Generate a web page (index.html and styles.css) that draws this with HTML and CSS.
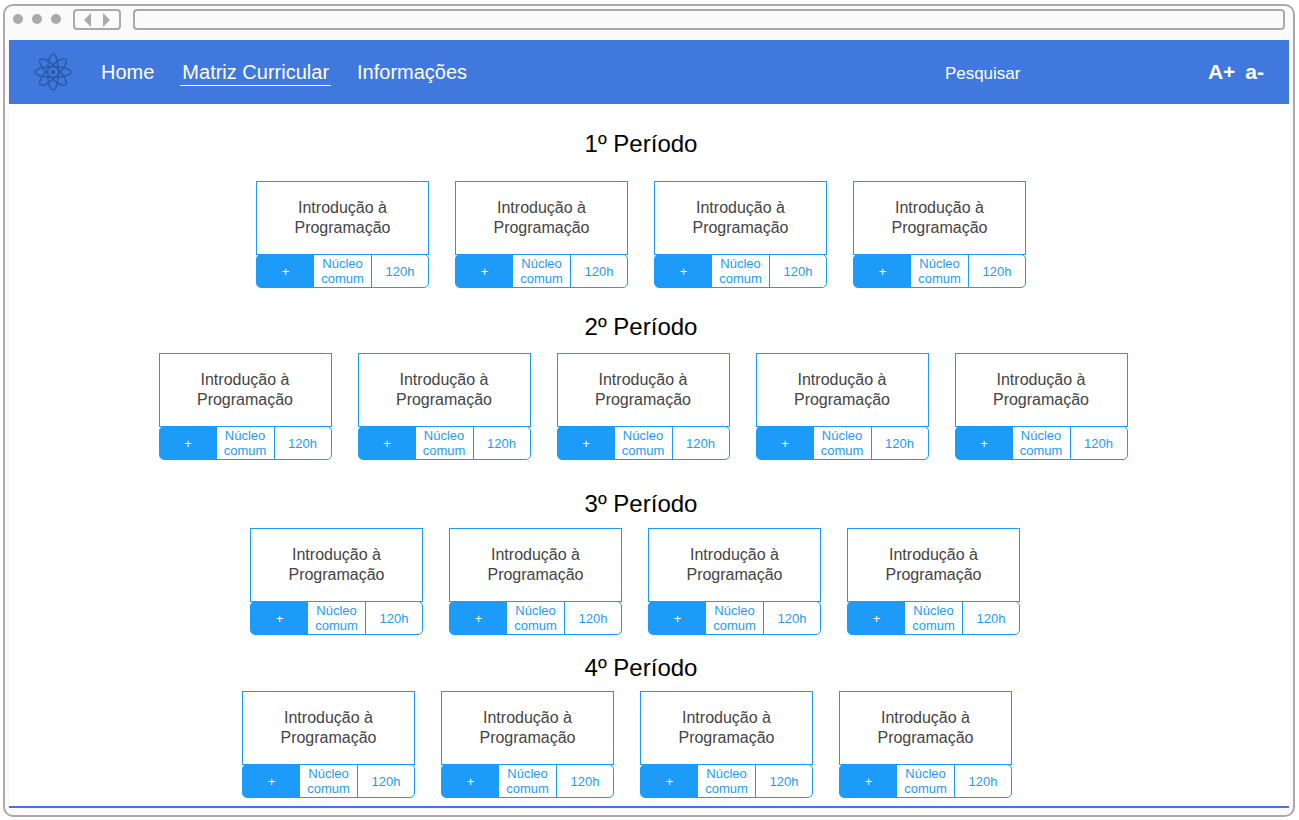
FILE: index.html
```
<!DOCTYPE html>
<html lang="pt-BR">
<head>
<meta charset="utf-8">
<title>Matriz Curricular</title>
<link rel="stylesheet" href="styles.css">
</head>
<body>
<div class="browser">
  <div class="toolbar">
    <div class="dots"><span class="dot"></span><span class="dot"></span><span class="dot"></span></div>
    <div class="history">
      <button class="arrow" type="button" aria-label="Voltar"><svg width="7" height="14" viewBox="0 0 7 14"><path d="M7 0v14L0 7z"/></svg></button>
      <button class="arrow" type="button" aria-label="Avançar"><svg width="7" height="14" viewBox="0 0 7 14"><path d="M0 0v14l7-7z"/></svg></button>
    </div>
    <input class="address" type="text" aria-label="Endereço">
  </div>
  <div class="page">
    <header class="header">
      <svg class="logo" viewBox="-19 -19 38 38" aria-hidden="true">
        <g fill="none" stroke="currentColor" stroke-width="1.6">
          <ellipse rx="18" ry="5.4"/>
          <ellipse rx="18" ry="5.4" transform="rotate(45)"/>
          <ellipse rx="18" ry="5.4" transform="rotate(90)"/>
          <ellipse rx="18" ry="5.4" transform="rotate(135)"/>
        </g>
        <circle r="4.2" fill="#4178dd"/>
        <circle r="2.2" fill="currentColor"/>
      </svg>
      <nav class="nav">
        <a class="link" href="#">Home</a>
        <a class="link current" href="#" aria-current="page">Matriz Curricular</a>
        <a class="link" href="#">Informações</a>
      </nav>
      <input class="search" type="text" placeholder="Pesquisar" aria-label="Pesquisar">
      <div class="sizes">
        <button class="size" type="button">A+</button>
        <button class="size" type="button">a-</button>
      </div>
    </header>
    <main class="main">
      <section class="period first">
        <h2 class="title">1º Período</h2>
        <div class="cards">
          <article class="card"><h3 class="name">Introdução à Programação</h3><div class="details"><button class="more" type="button">+</button><span class="cell">Núcleo comum</span><span class="cell hours">120h</span></div></article>
          <article class="card"><h3 class="name">Introdução à Programação</h3><div class="details"><button class="more" type="button">+</button><span class="cell">Núcleo comum</span><span class="cell hours">120h</span></div></article>
          <article class="card"><h3 class="name">Introdução à Programação</h3><div class="details"><button class="more" type="button">+</button><span class="cell">Núcleo comum</span><span class="cell hours">120h</span></div></article>
          <article class="card"><h3 class="name">Introdução à Programação</h3><div class="details"><button class="more" type="button">+</button><span class="cell">Núcleo comum</span><span class="cell hours">120h</span></div></article>
        </div>
      </section>
      <section class="period second">
        <h2 class="title">2º Período</h2>
        <div class="cards">
          <article class="card"><h3 class="name">Introdução à Programação</h3><div class="details"><button class="more" type="button">+</button><span class="cell">Núcleo comum</span><span class="cell hours">120h</span></div></article>
          <article class="card"><h3 class="name">Introdução à Programação</h3><div class="details"><button class="more" type="button">+</button><span class="cell">Núcleo comum</span><span class="cell hours">120h</span></div></article>
          <article class="card"><h3 class="name">Introdução à Programação</h3><div class="details"><button class="more" type="button">+</button><span class="cell">Núcleo comum</span><span class="cell hours">120h</span></div></article>
          <article class="card"><h3 class="name">Introdução à Programação</h3><div class="details"><button class="more" type="button">+</button><span class="cell">Núcleo comum</span><span class="cell hours">120h</span></div></article>
          <article class="card"><h3 class="name">Introdução à Programação</h3><div class="details"><button class="more" type="button">+</button><span class="cell">Núcleo comum</span><span class="cell hours">120h</span></div></article>
        </div>
      </section>
      <section class="period third">
        <h2 class="title">3º Período</h2>
        <div class="cards">
          <article class="card"><h3 class="name">Introdução à Programação</h3><div class="details"><button class="more" type="button">+</button><span class="cell">Núcleo comum</span><span class="cell hours">120h</span></div></article>
          <article class="card"><h3 class="name">Introdução à Programação</h3><div class="details"><button class="more" type="button">+</button><span class="cell">Núcleo comum</span><span class="cell hours">120h</span></div></article>
          <article class="card"><h3 class="name">Introdução à Programação</h3><div class="details"><button class="more" type="button">+</button><span class="cell">Núcleo comum</span><span class="cell hours">120h</span></div></article>
          <article class="card"><h3 class="name">Introdução à Programação</h3><div class="details"><button class="more" type="button">+</button><span class="cell">Núcleo comum</span><span class="cell hours">120h</span></div></article>
        </div>
      </section>
      <section class="period fourth">
        <h2 class="title">4º Período</h2>
        <div class="cards">
          <article class="card"><h3 class="name">Introdução à Programação</h3><div class="details"><button class="more" type="button">+</button><span class="cell">Núcleo comum</span><span class="cell hours">120h</span></div></article>
          <article class="card"><h3 class="name">Introdução à Programação</h3><div class="details"><button class="more" type="button">+</button><span class="cell">Núcleo comum</span><span class="cell hours">120h</span></div></article>
          <article class="card"><h3 class="name">Introdução à Programação</h3><div class="details"><button class="more" type="button">+</button><span class="cell">Núcleo comum</span><span class="cell hours">120h</span></div></article>
          <article class="card"><h3 class="name">Introdução à Programação</h3><div class="details"><button class="more" type="button">+</button><span class="cell">Núcleo comum</span><span class="cell hours">120h</span></div></article>
        </div>
      </section>
    </main>
  </div>
</div>
</body>
</html>
```

FILE: styles.css
```
* {
  box-sizing: border-box;
}

body {
  margin: 0;
  padding: 4px 4px 3px 3px;
  min-height: 100vh;
  display: flex;
  background: #fff;
  font-family: "Liberation Sans", Arial, sans-serif;
}

button,
input {
  margin: 0;
  padding: 0;
  border: 0;
  background: none;
  font: inherit;
  color: inherit;
}

.browser {
  flex: 1;
  display: flex;
  flex-direction: column;
  padding: 0 4px 7px;
  border: 2px solid #aaa;
  border-radius: 10px;
  background: #fafafa;
}

.toolbar {
  display: flex;
  align-items: flex-start;
  gap: 12px;
  height: 34px;
  padding: 3px 4px 0;
}

.dots {
  display: flex;
  gap: 9px;
  padding-top: 5px;
}

.dot {
  width: 10px;
  height: 10px;
  border-radius: 50%;
  background: #aaa;
}

.history {
  display: flex;
  align-items: center;
  justify-content: center;
  gap: 12px;
  width: 48px;
  height: 21px;
  border: 2px solid #aaa;
  border-radius: 4px;
}

.arrow {
  display: flex;
  fill: #aaa;
}

.address {
  flex: 1;
  min-width: 0;
  height: 21px;
  padding: 0 6px;
  border: 2px solid #aaa;
  border-radius: 4px;
  font-size: 13px;
}

.page {
  flex: 1;
  background: #fff;
  border-bottom: 2px solid #4178dd;
}

.header {
  display: flex;
  align-items: center;
  height: 64px;
  padding: 0 25px;
  background: #4178dd;
  color: #fff;
}

.logo {
  width: 38px;
  height: 38px;
  color: #2b5caa;
}

.nav {
  display: flex;
  gap: 26px;
  margin-left: 29px;
  margin-right: auto;
}

.link {
  border-bottom: 1px solid transparent;
  color: inherit;
  font-size: 20px;
  line-height: 26px;
  text-decoration: none;
}

.current {
  padding: 0 2px;
  border-bottom-color: #fff;
}

.search {
  width: 240px;
  margin-right: 23px;
  padding-top: 3px;
  font-size: 17px;
}

.search::placeholder {
  color: #fff;
  opacity: 1;
}

.sizes {
  display: flex;
  gap: 10px;
}

.size {
  font-size: 21px;
  font-weight: bold;
}

.main {
  padding: 26px 16px 8px 0;
}

.title {
  margin: 0;
  font-size: 24px;
  font-weight: normal;
  line-height: 28px;
  text-align: center;
}

.cards {
  display: flex;
  justify-content: center;
  gap: 26px;
}

.first .cards {
  padding-top: 23px;
}

.second {
  padding-top: 25px;
}

.second .cards {
  padding: 12px 0 0 4px;
}

.third {
  padding-top: 30px;
}

.third .cards {
  padding: 10px 12px 0 0;
}

.fourth {
  padding-top: 19px;
}

.fourth .cards {
  padding: 9px 28px 0 0;
}

.card {
  width: 173px;
  color: #1c9bf9;
}

.name {
  display: flex;
  align-items: center;
  justify-content: center;
  min-height: 74px;
  margin: 0;
  padding: 0 32px;
  border: 1px solid #1c9bf9;
  color: #444;
  font-size: 16px;
  font-weight: normal;
  line-height: 20px;
  text-align: center;
}

.details {
  display: grid;
  grid-template-columns: repeat(3, 1fr);
  min-height: 34px;
  margin-top: -1px;
  border: 1px solid #1c9bf9;
  border-radius: 5px;
  font-size: 13px;
  line-height: 15px;
  text-align: center;
}

.more {
  background: #1c9bf9;
  border-radius: 3px 0 0 3px;
  color: #fff;
}

.cell {
  display: flex;
  align-items: center;
  justify-content: center;
}

.hours {
  border-left: 1px solid #1c9bf9;
}
```
